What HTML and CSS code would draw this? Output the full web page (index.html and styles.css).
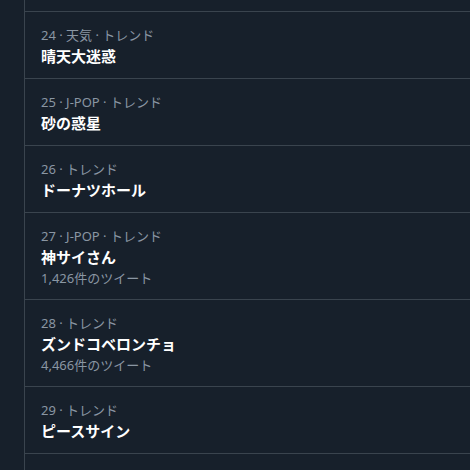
FILE: index.html
```html
<!DOCTYPE html>
<html lang="ja">
<head>
<meta charset="utf-8">
<link rel="stylesheet" href="styles.css">
</head>
<body>
<div class="page">
  <div class="gutter"></div>
  <div class="column">
    <div class="trend trend-partial"></div>
    <div class="trend">
      <div class="meta">24 · 天気 · トレンド</div>
      <div class="title">晴天大迷惑</div>
    </div>
    <div class="trend">
      <div class="meta">25 · J-POP · トレンド</div>
      <div class="title">砂の惑星</div>
    </div>
    <div class="trend">
      <div class="meta">26 · トレンド</div>
      <div class="title">ドーナツホール</div>
    </div>
    <div class="trend">
      <div class="meta">27 · J-POP · トレンド</div>
      <div class="title">神サイさん</div>
      <div class="count">1,426件のツイート</div>
    </div>
    <div class="trend">
      <div class="meta">28 · トレンド</div>
      <div class="title">ズンドコベロンチョ</div>
      <div class="count">4,466件のツイート</div>
    </div>
    <div class="trend">
      <div class="meta">29 · トレンド</div>
      <div class="title">ピースサイン</div>
    </div>
    <div class="trend trend-partial"></div>
  </div>
</div>
</body>
</html>
```
FILE: styles.css
```css
html, body {
  margin: 0;
  padding: 0;
  background: #17202b;
  height: 100%;
  overflow: hidden;
}

.page {
  display: flex;
  height: 470px;
  font-family: "Noto Sans", "Noto Sans CJK JP", sans-serif;
}

.gutter {
  width: 24px;
  flex: none;
}

.column {
  flex: 1;
  border-left: 1px solid #3a444e;
  display: flex;
  flex-direction: column;
}

.trend {
  padding: 13px 16px 11px 16px;
  border-bottom: 1px solid #3a444e;
  flex: none;
}

.trend-partial {
  height: 12px;
  padding: 0;
  box-sizing: border-box;
}

.trend-partial:last-child {
  border-bottom: none;
  height: 20px;
}

.meta {
  font-size: 13px;
  line-height: 20px;
  color: #8a96a3;
}

.title {
  font-size: 15px;
  line-height: 22px;
  font-weight: 700;
  color: #ffffff;
}

.count {
  font-size: 13px;
  line-height: 20px;
  color: #8a96a3;
}
```
